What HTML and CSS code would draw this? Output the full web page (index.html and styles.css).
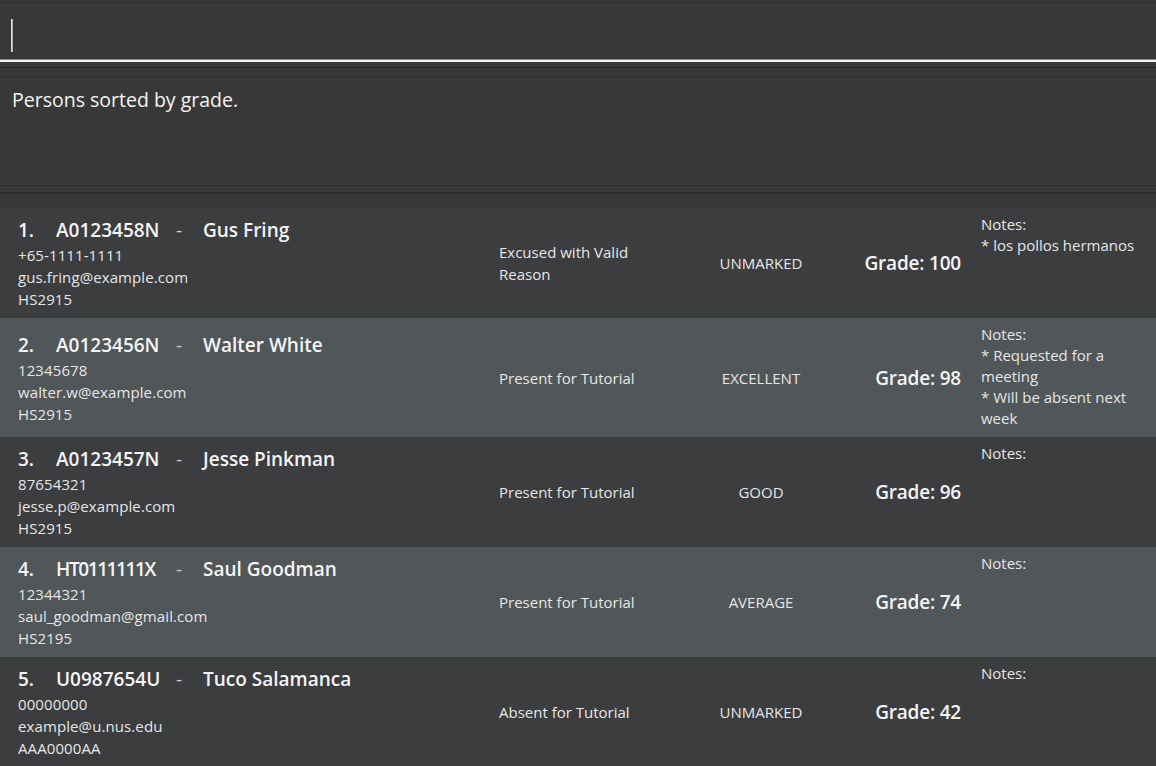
FILE: index.html
```html
<!DOCTYPE html>
<html>
<head>
<meta charset="utf-8">
<link rel="stylesheet" href="styles.css">
</head>
<body>
<div class="app">
  <div class="command-pane">
    <div class="command-box"><span class="caret"></span></div>
  </div>
  <div class="divider"></div>
  <div class="result-pane">
    <div class="result-text">Persons sorted by grade.</div>
  </div>
  <div class="divider2"></div>
  <div class="list">
    <div class="card odd">
      <div class="info">
        <div class="head"><span class="idx">1.</span><span class="sid">A0123458N</span><span class="dash">-</span><span class="name">Gus Fring</span></div>
        <div class="line">+65-1111-1111</div>
        <div class="line">gus.fring@example.com</div>
        <div class="line">HS2915</div>
      </div>
      <div class="att">Excused with Valid Reason</div>
      <div class="part">UNMARKED</div>
      <div class="grade">Grade: 100</div>
      <div class="notes"><div>Notes:</div><div>* los pollos hermanos</div></div>
    </div>
    <div class="card even">
      <div class="info">
        <div class="head"><span class="idx">2.</span><span class="sid">A0123456N</span><span class="dash">-</span><span class="name">Walter White</span></div>
        <div class="line">12345678</div>
        <div class="line">walter.w@example.com</div>
        <div class="line">HS2915</div>
      </div>
      <div class="att">Present for Tutorial</div>
      <div class="part">EXCELLENT</div>
      <div class="grade">Grade: 98</div>
      <div class="notes"><div>Notes:</div><div>* Requested for a meeting</div><div>* Will be absent next week</div></div>
    </div>
    <div class="card odd">
      <div class="info">
        <div class="head"><span class="idx">3.</span><span class="sid">A0123457N</span><span class="dash">-</span><span class="name">Jesse Pinkman</span></div>
        <div class="line">87654321</div>
        <div class="line">jesse.p@example.com</div>
        <div class="line">HS2915</div>
      </div>
      <div class="att">Present for Tutorial</div>
      <div class="part">GOOD</div>
      <div class="grade">Grade: 96</div>
      <div class="notes"><div>Notes:</div></div>
    </div>
    <div class="card even">
      <div class="info">
        <div class="head"><span class="idx">4.</span><span class="sid narrow">HT0111111X</span><span class="dash">-</span><span class="name">Saul Goodman</span></div>
        <div class="line">12344321</div>
        <div class="line">saul_goodman@gmail.com</div>
        <div class="line">HS2195</div>
      </div>
      <div class="att">Present for Tutorial</div>
      <div class="part">AVERAGE</div>
      <div class="grade">Grade: 74</div>
      <div class="notes"><div>Notes:</div></div>
    </div>
    <div class="card odd">
      <div class="info">
        <div class="head"><span class="idx">5.</span><span class="sid">U0987654U</span><span class="dash">-</span><span class="name">Tuco Salamanca</span></div>
        <div class="line">00000000</div>
        <div class="line">example@u.nus.edu</div>
        <div class="line">AAA0000AA</div>
      </div>
      <div class="att">Absent for Tutorial</div>
      <div class="part">UNMARKED</div>
      <div class="grade">Grade: 42</div>
      <div class="notes"><div>Notes:</div></div>
    </div>
  </div>
</div>
</body>
</html>
```

FILE: styles.css
```css
* { box-sizing: border-box; }
html, body {
  margin: 0;
  padding: 0;
  background: #383838;
  width: 1156px;
  height: 766px;
  overflow: hidden;
  font-family: "Open Sans", "Noto Sans", sans-serif;
  color: #e6e6e6;
}
.app { display: flex; flex-direction: column; }
.command-pane {
  padding-top: 2px;
  background: #383838;
}
.command-box {
  height: 58px;
  border-top: 1px solid #2b2b2b;
  border-bottom: 1px solid #8a8a8a;
  background: #383838;
  padding: 16px 0 0 11px;
}
.caret {
  display: block;
  width: 2px;
  height: 33px;
  background: linear-gradient(to right, #f2f2f2, #9a9a9a);
}
.divider {
  height: 16px;
  border-top: 2px solid #f5f5f5;
  background: #383838;
  display: flex;
  flex-direction: column;
}
.divider::before {
  content: "";
  display: block;
  margin-top: 5px;
  height: 1px;
  background: #2a2a2a;
}
.result-pane {
  height: 110px;
  border-top: 1px solid #2b2b2b;
  border-bottom: 1px solid #2b2b2b;
  padding: 10px 12px;
}
.result-text {
  font-size: 19.5px;
  line-height: 26px;
  color: #f4f4f4;
  font-weight: 400;
}
.divider2 {
  height: 22px;
  display: flex;
  flex-direction: column;
}
.divider2::before {
  content: "";
  display: block;
  margin-top: 6px;
  height: 2px;
  background: #2a2a2a;
}
.list { display: flex; flex-direction: column; }
.card {
  display: flex;
  align-items: center;
  min-height: 110px;
  padding: 0 0 0 18px;
}
.card.odd { background: #3c3d3f; }
.card.even { background: #515658; }
.info {
  width: 481px;
  flex: none;
  display: flex;
  flex-direction: column;
}
.head {
  font-size: 19px;
  font-weight: 600;
  color: #f4f4f4;
  line-height: 28px;
  height: 28px;
  display: flex;
}
.idx { width: 38px; }
.sid { width: 120px; white-space: nowrap; }
.sid.narrow { letter-spacing: -1.4px; }
.dash { width: 27px; font-weight: 400; color: #cfcfcf; }
.line {
  font-size: 15px;
  line-height: 22px;
  color: #e6e6e6;
  letter-spacing: 0.1px;
}
.att {
  width: 160px;
  flex: none;
  font-size: 15px;
  line-height: 22px;
  color: #e6e6e6;
}
.part {
  width: 204px;
  flex: none;
  text-align: center;
  font-size: 15px;
  color: #e6e6e6;
}
.grade {
  width: 98px;
  flex: none;
  text-align: right;
  font-size: 19px;
  font-weight: 600;
  color: #f4f4f4;
  letter-spacing: -0.2px;
  white-space: nowrap;
}
.notes {
  align-self: flex-start;
  margin-left: 20px;
  width: 165px;
  flex: none;
  padding: 6px 0 8px;
  font-size: 15px;
  line-height: 21px;
  color: #e6e6e6;
}
```
